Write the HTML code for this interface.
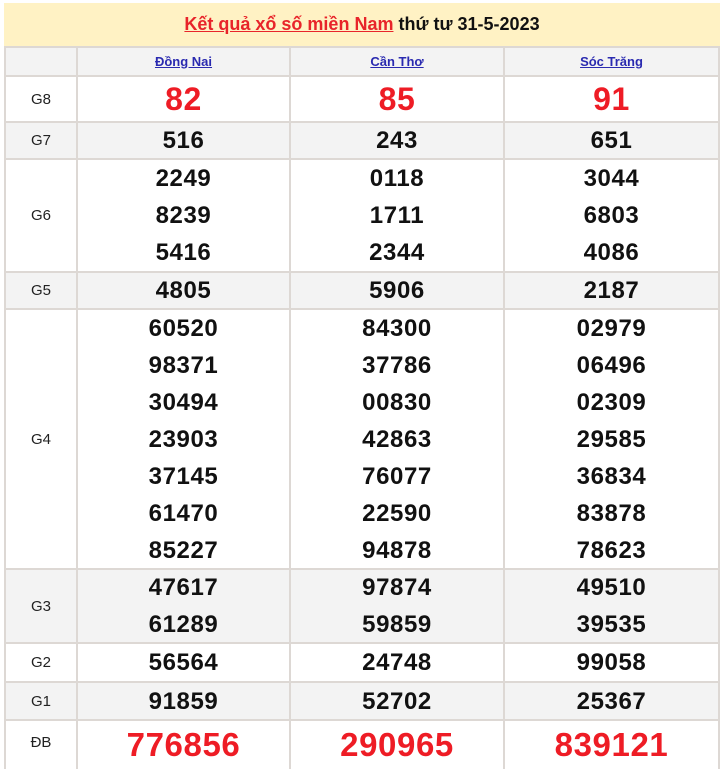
<!DOCTYPE html>
<html><head><meta charset="utf-8"><style>
body{margin:0;width:720px;height:762px;background:#fff;font-family:"Liberation Sans",Arial,sans-serif;overflow:hidden;position:relative}
.hd{position:absolute;left:4px;top:3px;width:716px;height:43px;background:#fff2c4;text-align:center;line-height:43px;font-size:18px;font-weight:bold;color:#111}
.hd a{color:#e8242a;text-decoration:underline}
.r{position:absolute;left:4px;width:716px;border-top:2px solid #ddd8d4;box-sizing:border-box;display:flex}
.r div{box-sizing:border-box;border-left:2px solid #ddd8d4;text-align:center;display:flex;flex-direction:column;justify-content:center;font-weight:bold;font-size:24px;letter-spacing:0.6px;color:#111;line-height:37px}
.r div:nth-child(1){width:72px;font-weight:normal;font-size:15px;letter-spacing:0;color:#222}
.r div:nth-child(2){width:213px}.r div:nth-child(3){width:214px}.r div:nth-child(4){width:217px;border-right:2px solid #ddd8d4}
.g{background:#f3f3f3}
.nm div{font-size:13px!important;line-height:16px!important;letter-spacing:0!important}
.nm a{color:#2a2ab0;text-decoration:underline}
.red div:not(:first-child){color:#ee1c25;font-size:32px}
.db div:not(:first-child){font-size:33px!important}
</style></head><body>
<div class="hd"><a>Kết quả xổ số miền Nam</a> thứ tư 31-5-2023</div>
<div class="r g nm" style="top:46px;height:29px"><div></div><div><a>Đồng Nai</a></div><div><a>Cần Thơ</a></div><div><a>Sóc Trăng</a></div></div>
<div class="r red" style="top:75px;height:46px"><div>G8</div><div>82</div><div>85</div><div>91</div></div>
<div class="r g" style="top:121px;height:37px"><div>G7</div><div>516</div><div>243</div><div>651</div></div>
<div class="r" style="top:158px;height:113px"><div>G6</div><div>2249<br>8239<br>5416</div><div>0118<br>1711<br>2344</div><div>3044<br>6803<br>4086</div></div>
<div class="r g" style="top:271px;height:37px"><div>G5</div><div>4805</div><div>5906</div><div>2187</div></div>
<div class="r" style="top:308px;height:260px"><div>G4</div><div>60520<br>98371<br>30494<br>23903<br>37145<br>61470<br>85227</div><div>84300<br>37786<br>00830<br>42863<br>76077<br>22590<br>94878</div><div>02979<br>06496<br>02309<br>29585<br>36834<br>83878<br>78623</div></div>
<div class="r g" style="top:568px;height:74px"><div>G3</div><div>47617<br>61289</div><div>97874<br>59859</div><div>49510<br>39535</div></div>
<div class="r" style="top:642px;height:39px"><div>G2</div><div>56564</div><div>24748</div><div>99058</div></div>
<div class="r g" style="top:681px;height:38px"><div>G1</div><div>91859</div><div>52702</div><div>25367</div></div>
<div class="r red db" style="top:719px;height:50px"><div style="padding-bottom:6px">ĐB</div><div style="padding-bottom:2px">776856</div><div style="padding-bottom:2px">290965</div><div style="padding-bottom:2px">839121</div></div>
</body></html>
